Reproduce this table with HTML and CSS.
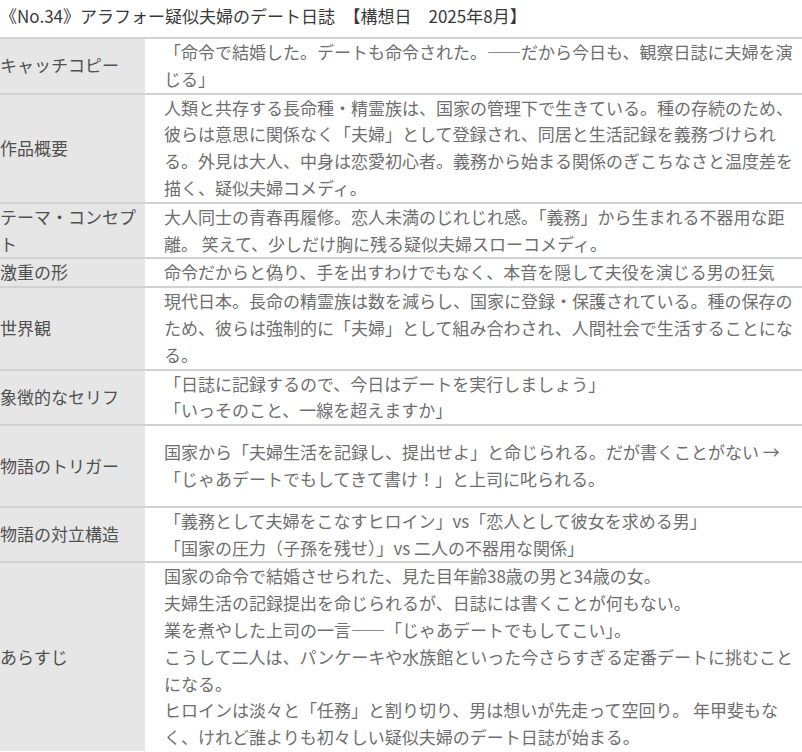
FILE: index.html
```html
<!DOCTYPE html>
<html lang="ja">
<head>
<meta charset="utf-8">
<title>アラフォー疑似夫婦のデート日誌</title>
<link rel="stylesheet" href="styles.css">
</head>
<body>
<h1 class="title">《No.34》アラフォー疑似夫婦のデート日誌　【構想日　2025年8月】</h1>
<div class="sheet">
  <div class="row">
    <div class="label">キャッチコピー</div>
    <div class="value">「命令で結婚した。デートも命令された。——だから今日も、観察日誌に夫婦を演じる」</div>
  </div>
  <div class="row">
    <div class="label">作品概要</div>
    <div class="value">人類と共存する長命種・精霊族は、国家の管理下で生きている。種の存続のため、彼らは意思に関係なく「夫婦」として登録され、同居と生活記録を義務づけられる。外見は大人、中身は恋愛初心者。義務から始まる関係のぎこちなさと温度差を描く、疑似夫婦コメディ。</div>
  </div>
  <div class="row">
    <div class="label">テーマ・コンセプト</div>
    <div class="value">大人同士の青春再履修。恋人未満のじれじれ感。「義務」から生まれる不器用な距離。 笑えて、少しだけ胸に残る疑似夫婦スローコメディ。</div>
  </div>
  <div class="row">
    <div class="label">激重の形</div>
    <div class="value">命令だからと偽り、手を出すわけでもなく、本音を隠して夫役を演じる男の狂気</div>
  </div>
  <div class="row">
    <div class="label">世界観</div>
    <div class="value">現代日本。長命の精霊族は数を減らし、国家に登録・保護されている。種の保存のため、彼らは強制的に「夫婦」として組み合わされ、人間社会で生活することになる。</div>
  </div>
  <div class="row">
    <div class="label">象徴的なセリフ</div>
    <div class="value">「日誌に記録するので、今日はデートを実行しましょう」<br>「いっそのこと、一線を超えますか」</div>
  </div>
  <div class="row">
    <div class="label">物語のトリガー</div>
    <div class="value padded">国家から「夫婦生活を記録し、提出せよ」と命じられる。だが書くことがない →<br>「じゃあデートでもしてきて書け！」と上司に叱られる。</div>
  </div>
  <div class="row">
    <div class="label">物語の対立構造</div>
    <div class="value">「義務として夫婦をこなすヒロイン」vs「恋人として彼女を求める男」<br>「国家の圧力（子孫を残せ）」vs 二人の不器用な関係」</div>
  </div>
  <div class="row">
    <div class="label">あらすじ</div>
    <div class="value">国家の命令で結婚させられた、見た目年齢38歳の男と34歳の女。<br>夫婦生活の記録提出を命じられるが、日誌には書くことが何もない。<br>業を煮やした上司の一言——「じゃあデートでもしてこい」。<br>こうして二人は、パンケーキや水族館といった今さらすぎる定番デートに挑むことになる。<br>ヒロインは淡々と「任務」と割り切り、男は想いが先走って空回り。 年甲斐もなく、けれど誰よりも初々しい疑似夫婦のデート日誌が始まる。</div>
  </div>
</div>
</body>
</html>
```

FILE: styles.css
```css
html, body {
  margin: 0;
  padding: 0;
  background: #ffffff;
}

body {
  font-family: "Noto Sans CJK JP", "Noto Sans", sans-serif;
  font-size: 17px;
  color: #333333;
  text-autospace: no-autospace;
  overflow: hidden;
}

.title {
  margin: 0;
  padding: 2px 0 8px 0;
  font-size: 17px;
  font-weight: normal;
  line-height: 27px;
  color: #383838;
  white-space: nowrap;
}

.sheet {
  display: flex;
  flex-direction: column;
}

.row {
  display: grid;
  grid-template-columns: 145px 1fr;
  border-top: 2px solid #d2d2d2;
}

.label {
  display: flex;
  align-items: center;
  background: #e6e6e6;
  color: #505050;
  line-height: 26.8px;
  padding: 0 3px 0 0;
}

.value {
  background: #ffffff;
  color: #6e6e6e;
  line-height: 26.8px;
  padding: 0 4px 0 19px;
}

.value.padded {
  padding-top: 13px;
  padding-bottom: 13px;
}
```
